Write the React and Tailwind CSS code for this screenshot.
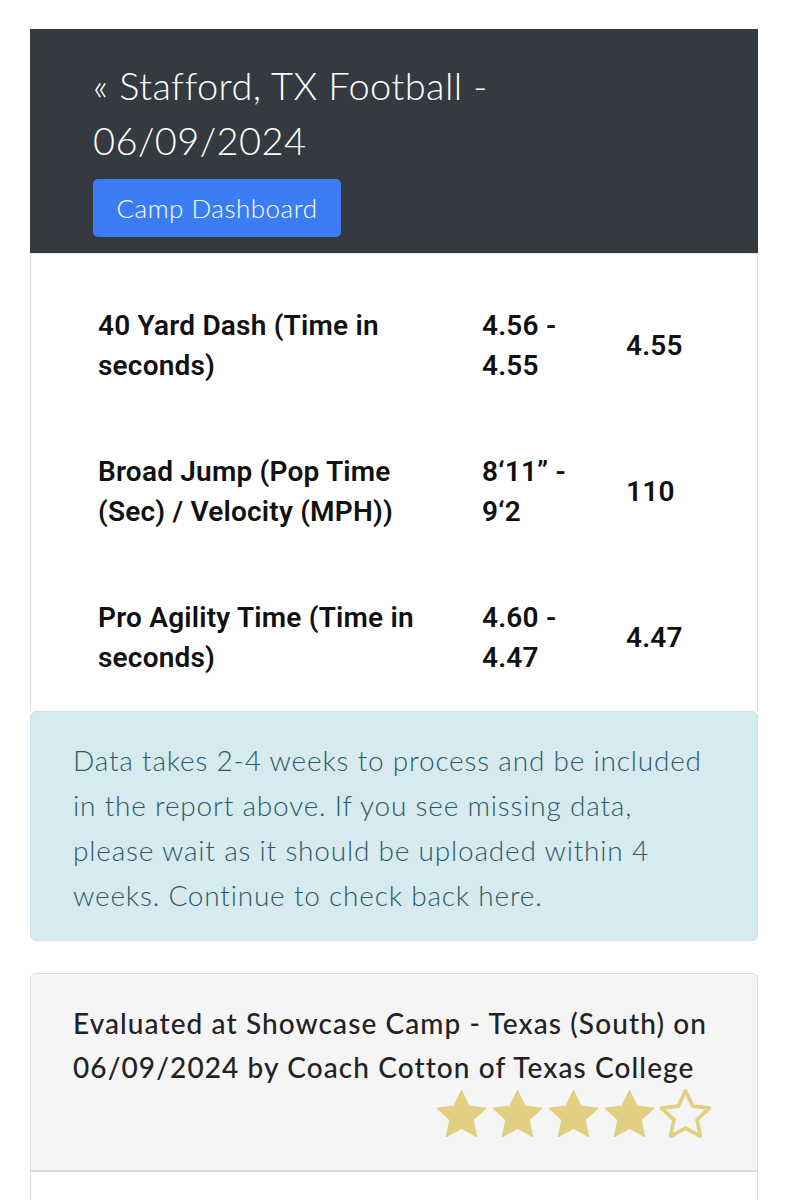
const RALE = { fontFamily: 'Lato, "Open Sans", sans-serif' }

const ROWS = [
  { name: '40 Yard Dash (Time in seconds)', range: ['4.56 -', '4.55'], best: '4.55' },
  { name: 'Broad Jump (Pop Time (Sec) / Velocity (MPH))', range: ['8\u201811\u201d -', '9\u20182'], best: '110' },
  { name: 'Pro Agility Time (Time in seconds)', range: ['4.60 -', '4.47'], best: '4.47' },
]

function Star({ filled }) {
  const d = 'M12 1.6l3.1 6.6 7.2.85-5.35 4.95 1.45 7.15L12 17.6l-6.4 3.55 1.45-7.15L1.7 9.05l7.2-.85z'
  return (
    <svg viewBox="0 0 24 24" className="w-[57px] h-[56px] -mx-[0.5px]">
      <path d={d} fill={filled ? '#e2cf82' : 'none'} stroke="#e2cf82" strokeWidth={filled ? 0.6 : 1.6} strokeLinejoin="round" />
    </svg>
  )
}

export default function App() {
  return (
    <div className="bg-white h-[1200px] overflow-hidden pt-[29px] pl-[30px] pr-[31px]" style={RALE}>
      {/* header */}
      <div className="bg-[#343a40] pt-[29px] pb-[16px] px-[63px]">
        <h1 className="text-white text-[38px] leading-[55px] font-light tracking-[0.4px]">
          « Stafford, TX Football - 06/09/2024
        </h1>
        <button className="mt-[11px] bg-[#3a7cf2] text-white text-[26px] font-light tracking-[0.5px] rounded-[5px] h-[58px] w-[248px]">
          Camp Dashboard
        </button>
      </div>

      {/* results */}
      <div className="border-x border-[#dcdcdc] border-t border-t-[#e3e5e6] pt-[19px]">
        {ROWS.map(r => (
          <div key={r.name} className="grid grid-cols-[384px_144px_1fr] items-center pl-[67px] py-[33px] text-[28px] leading-[40px] font-semibold tracking-[0.2px] text-[#111]"
            style={{ fontFamily: 'Roboto, "Liberation Sans", sans-serif' }}>
            <div className="pr-[24px]">{r.name}</div>
            <div>{r.range[0]}<br />{r.range[1]}</div>
            <div>{r.best}</div>
          </div>
        ))}
      </div>

      {/* info alert */}
      <div className="bg-[#d6eaf0] border border-[#c6e1e8] rounded-[6px] pt-[26px] pb-[22px] pl-[42px] pr-[46px] text-[#2c5b67] text-[28px] leading-[45px] font-light tracking-[0.8px]">
        Data takes 2-4 weeks to process and be included in the report above. If you see missing data, please wait as it should be uploaded within 4 weeks. Continue to check back here.
      </div>

      {/* evaluation card */}
      <div className="mt-[32px] border border-[#dcdcdc] rounded-[6px] overflow-hidden">
        <div className="bg-[#f5f5f5] border-b-2 border-[#dcdcdc] pt-[27px] pb-[27px] pl-[42px] pr-[42px]">
          <p className="text-[#222] text-[28px] leading-[44px] font-medium tracking-[1.1px]">
            Evaluated at Showcase Camp - Texas (South) on 06/09/2024 by Coach Cotton of Texas College
          </p>
          <div className="flex justify-end mt-[-2px] mr-[2px]">
            <Star filled /><Star filled /><Star filled /><Star filled /><Star />
          </div>
        </div>
        <div className="h-[60px] bg-white" />
      </div>
    </div>
  )
}
